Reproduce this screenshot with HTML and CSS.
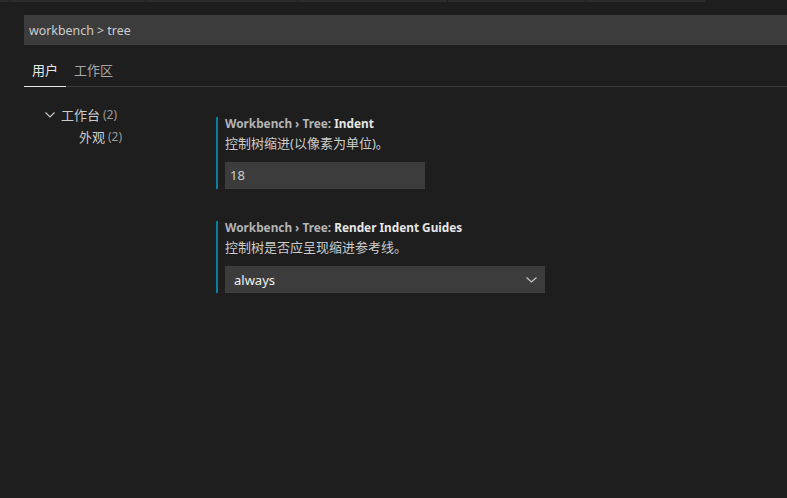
FILE: index.html
```html
<!DOCTYPE html>
<html lang="zh-CN">
<head>
<meta charset="utf-8">
<title>Settings</title>
<link rel="stylesheet" href="styles.css">
</head>
<body>
<div class="topstrip">
  <span class="seg s1"></span><span class="seg s2"></span><span class="seg s3"></span><span class="seg s4"></span><span class="seg s5"></span><span class="seg s6"></span>
</div>
<div class="search">workbench &gt; tree</div>
<div class="tabs">
  <div class="tab active">用户</div>
  <div class="tab">工作区</div>
</div>
<div class="main">
  <div class="toc">
    <div class="toc-row">
      <svg class="chev" width="10" height="6" viewBox="0 0 10 6"><path d="M0.5 0.5 L5 5 L9.5 0.5" fill="none" stroke="#c5c5c5" stroke-width="1.2"/></svg>
      <span class="toc-label">工作台</span><span class="count">(2)</span>
    </div>
    <div class="toc-row child">
      <span class="toc-label">外观</span><span class="count">(2)</span>
    </div>
  </div>
  <div class="settings">
    <div class="setting">
      <div class="title"><span class="cat">Workbench › Tree: </span><span class="name">Indent</span></div>
      <div class="desc">控制树缩进(以像素为单位)。</div>
      <div class="input">18</div>
    </div>
    <div class="setting">
      <div class="title"><span class="cat">Workbench › Tree: </span><span class="name">Render Indent Guides</span></div>
      <div class="desc">控制树是否应呈现缩进参考线。</div>
      <div class="select"><span>always</span>
        <svg class="sel-chev" width="11" height="6" viewBox="0 0 11 6"><path d="M0.5 0.5 L5.5 5 L10.5 0.5" fill="none" stroke="#c5c5c5" stroke-width="1.2"/></svg>
      </div>
    </div>
  </div>
</div>
</body>
</html>
```

FILE: styles.css
```css
* { box-sizing: border-box; }
html, body {
  margin: 0;
  padding: 0;
  background: #1e1e1e;
  width: 787px;
  height: 498px;
  overflow: hidden;
  font-family: "Noto Sans", "Noto Sans CJK SC", sans-serif;
  font-size: 13px;
  color: #cccccc;
}
.topstrip {
  display: flex;
  height: 15px;
  align-items: flex-start;
}
.seg {
  height: 2px;
  background: #2b2b2b;
  border-right: 1px solid #1e1e1e;
}
.s1 { width: 10px; }
.s2 { width: 136px; }
.s3 { width: 152px; }
.s4 { width: 150px; }
.s5 { width: 138px; }
.s6 { width: 120px; }
.search {
  margin-left: 24px;
  height: 30px;
  background: #3c3c3c;
  padding-left: 5px;
  padding-top: 1px;
  line-height: 29px;
  color: #cccccc;
  font-size: 12.4px;
}
.tabs {
  display: flex;
  margin-left: 24px;
  height: 42px;
  border-bottom: 1px solid #3b3b3b;
}
.tab {
  padding: 15px 8px 0;
  height: 42px;
  line-height: 20px;
  color: #a8a8a8;
  font-size: 13px;
  border-bottom: 1px solid transparent;
}
.tab.active {
  color: #e7e7e7;
  border-bottom-color: #e7e7e7;
}
.main {
  display: flex;
}
.toc {
  width: 216px;
  padding-top: 16px;
  padding-left: 45px;
}
.toc-row {
  display: flex;
  align-items: center;
  height: 22px;
}
.chev { margin-right: 6px; margin-top: 1px; }
.toc-row.child { padding-left: 34px; }
.toc-label { color: #cccccc; }
.count { color: #9a9a9a; margin-left: 3px; font-size: 12px; }
.settings {
  padding-top: 30px;
  display: flex;
  flex-direction: column;
  gap: 32px;
}
.setting {
  border-left: 2px solid #0c7d9d;
  padding-left: 7px;
}
.title {
  font-weight: bold;
  line-height: 12px;
  font-size: 11.8px;
}
.cat { color: #b4b4b4; }
.name { color: #e7e7e7; }
.desc {
  margin-top: 4px;
  line-height: 20px;
  color: #cccccc;
}
.input {
  margin-top: 9px;
  width: 200px;
  height: 27px;
  background: #3c3c3c;
  padding-left: 5px;
  line-height: 27px;
  color: #cccccc;
}
.select {
  margin-top: 9px;
  width: 320px;
  height: 27px;
  background: #3c3c3c;
  padding-left: 9px;
  padding-right: 8px;
  display: flex;
  align-items: center;
  justify-content: space-between;
  color: #f0f0f0;
}
```
